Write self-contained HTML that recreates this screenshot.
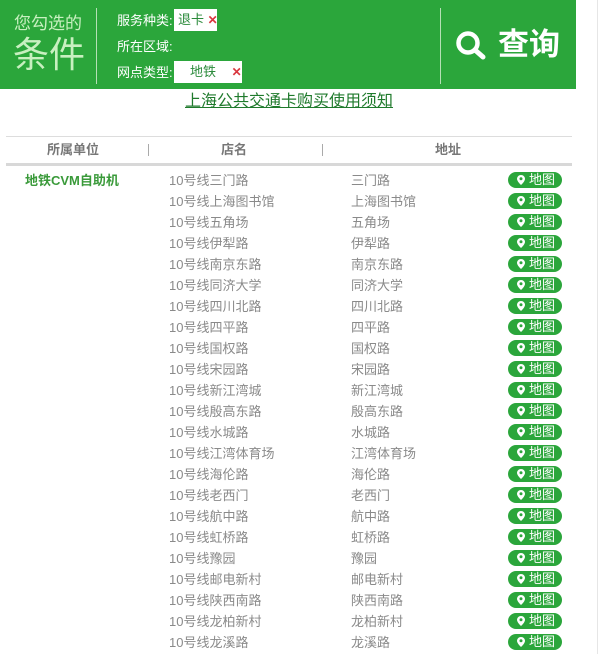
<!DOCTYPE html>
<html><head><meta charset="utf-8">
<style>
*{margin:0;padding:0;box-sizing:border-box}
body{width:602px;height:654px;background:#fff;position:relative;overflow:hidden;font-family:"Liberation Sans","Noto Sans CJK SC",sans-serif}
.a{position:absolute;white-space:nowrap}
#hd{position:absolute;left:0;top:0;width:576px;height:89px;background:#2ba63b}
.lbl{color:#fff;font-size:13px;line-height:16px}
.tag{background:#fff;color:#2a8a3a;font-size:13px;line-height:22px;height:22px}
.x{color:#d9363e;font-weight:bold;font-size:12px}
.n{color:#8a8a8a;font-size:13px;line-height:16px}
.b{position:absolute;left:508px;width:54px;height:16px;border-radius:8px;background:#2ba63b;color:#fff;font-size:13px;line-height:16px}
.b svg{position:absolute;left:9px;top:3px}
.b span{position:absolute;left:21px;top:0}
</style></head><body>
<div id="hd">
<div class="a" style="left:14px;top:13px;color:#c8f0c0;font-size:17px;line-height:22px">您勾选的</div>
<div class="a" style="left:13px;top:34px;color:#c8f0c0;font-size:36px;line-height:42px">条件</div>
<div class="a" style="left:96px;top:8px;width:1px;height:76px;background:#b5e0b5"></div>
<div class="a lbl" style="left:117px;top:13px">服务种类:</div>
<div class="a tag" style="left:174px;top:9px;width:43px;padding-left:4px">退卡 <span class="x">✕</span></div>
<div class="a lbl" style="left:117px;top:39px">所在区域:</div>
<div class="a lbl" style="left:117px;top:65px">网点类型:</div>
<div class="a tag" style="left:174px;top:61px;width:68px;padding-left:16px">地铁 <span class="x" style="margin-left:12px">✕</span></div>
<div class="a" style="left:440px;top:8px;width:1px;height:76px;background:#b5e0b5"></div>
<svg class="a" style="left:455px;top:29px" width="34" height="34" viewBox="0 0 34 34"><circle cx="13" cy="14" r="9.5" fill="none" stroke="#fff" stroke-width="4.5"/><line x1="20" y1="21" x2="28" y2="28" stroke="#fff" stroke-width="5" stroke-linecap="round"/></svg>
<div class="a" style="left:498px;top:26px;color:#fff;font-size:31px;line-height:38px;font-weight:bold">查询</div>
</div>
<div class="a" style="left:597px;top:0;width:1px;height:654px;background:#e6e6e6"></div>
<div class="a" style="left:185px;top:92px;font-size:16px;line-height:20px;color:#1f7a2c;text-decoration:underline">上海公共交通卡购买使用须知</div>
<div class="a" style="left:6px;top:136px;width:566px;height:1px;background:#ddd"></div>
<div class="a" style="left:6px;top:142px;width:134px;text-align:center;color:#777;font-size:13px;line-height:16px;font-weight:bold">所属单位</div>
<div class="a" style="left:148px;top:144px;width:1px;height:12px;background:#aaa"></div>
<div class="a" style="left:190px;top:142px;width:88px;text-align:center;color:#777;font-size:13px;line-height:16px;font-weight:bold">店名</div>
<div class="a" style="left:322px;top:144px;width:1px;height:12px;background:#aaa"></div>
<div class="a" style="left:420px;top:142px;width:56px;text-align:center;color:#777;font-size:13px;line-height:16px;font-weight:bold">地址</div>
<div class="a" style="left:6px;top:163px;width:566px;height:3px;background:#d8d8d8"></div>
<div class="a" style="left:25px;top:173px;color:#3a9a3a;font-size:13px;line-height:16px;font-weight:bold">地铁CVM自助机</div>
<div class="a n" style="left:169px;top:173px">10号线三门路</div><div class="a n" style="left:351px;top:173px">三门路</div>
<div class="a n" style="left:169px;top:194px">10号线上海图书馆</div><div class="a n" style="left:351px;top:194px">上海图书馆</div>
<div class="a n" style="left:169px;top:215px">10号线五角场</div><div class="a n" style="left:351px;top:215px">五角场</div>
<div class="a n" style="left:169px;top:236px">10号线伊犁路</div><div class="a n" style="left:351px;top:236px">伊犁路</div>
<div class="a n" style="left:169px;top:257px">10号线南京东路</div><div class="a n" style="left:351px;top:257px">南京东路</div>
<div class="a n" style="left:169px;top:278px">10号线同济大学</div><div class="a n" style="left:351px;top:278px">同济大学</div>
<div class="a n" style="left:169px;top:299px">10号线四川北路</div><div class="a n" style="left:351px;top:299px">四川北路</div>
<div class="a n" style="left:169px;top:320px">10号线四平路</div><div class="a n" style="left:351px;top:320px">四平路</div>
<div class="a n" style="left:169px;top:341px">10号线国权路</div><div class="a n" style="left:351px;top:341px">国权路</div>
<div class="a n" style="left:169px;top:362px">10号线宋园路</div><div class="a n" style="left:351px;top:362px">宋园路</div>
<div class="a n" style="left:169px;top:383px">10号线新江湾城</div><div class="a n" style="left:351px;top:383px">新江湾城</div>
<div class="a n" style="left:169px;top:404px">10号线殷高东路</div><div class="a n" style="left:351px;top:404px">殷高东路</div>
<div class="a n" style="left:169px;top:425px">10号线水城路</div><div class="a n" style="left:351px;top:425px">水城路</div>
<div class="a n" style="left:169px;top:446px">10号线江湾体育场</div><div class="a n" style="left:351px;top:446px">江湾体育场</div>
<div class="a n" style="left:169px;top:467px">10号线海伦路</div><div class="a n" style="left:351px;top:467px">海伦路</div>
<div class="a n" style="left:169px;top:488px">10号线老西门</div><div class="a n" style="left:351px;top:488px">老西门</div>
<div class="a n" style="left:169px;top:509px">10号线航中路</div><div class="a n" style="left:351px;top:509px">航中路</div>
<div class="a n" style="left:169px;top:530px">10号线虹桥路</div><div class="a n" style="left:351px;top:530px">虹桥路</div>
<div class="a n" style="left:169px;top:551px">10号线豫园</div><div class="a n" style="left:351px;top:551px">豫园</div>
<div class="a n" style="left:169px;top:572px">10号线邮电新村</div><div class="a n" style="left:351px;top:572px">邮电新村</div>
<div class="a n" style="left:169px;top:593px">10号线陕西南路</div><div class="a n" style="left:351px;top:593px">陕西南路</div>
<div class="a n" style="left:169px;top:614px">10号线龙柏新村</div><div class="a n" style="left:351px;top:614px">龙柏新村</div>
<div class="a n" style="left:169px;top:635px">10号线龙溪路</div><div class="a n" style="left:351px;top:635px">龙溪路</div>
<div id="btns"></div>
<script>
var h="";for(var i=0;i<23;i++){h+='<div class="b" style="top:'+(172+21*i)+'px"><svg width="8" height="10" viewBox="0 0 8 10"><path d="M4 0C1.8 0 0 1.7 0 3.9 0 6.5 4 10 4 10S8 6.5 8 3.9C8 1.7 6.2 0 4 0Z" fill="#fff"/><circle cx="4" cy="3.8" r="1.5" fill="#2ba63b"/></svg><span>地图</span></div>';}
document.getElementById("btns").innerHTML=h;
</script>
</body></html>
